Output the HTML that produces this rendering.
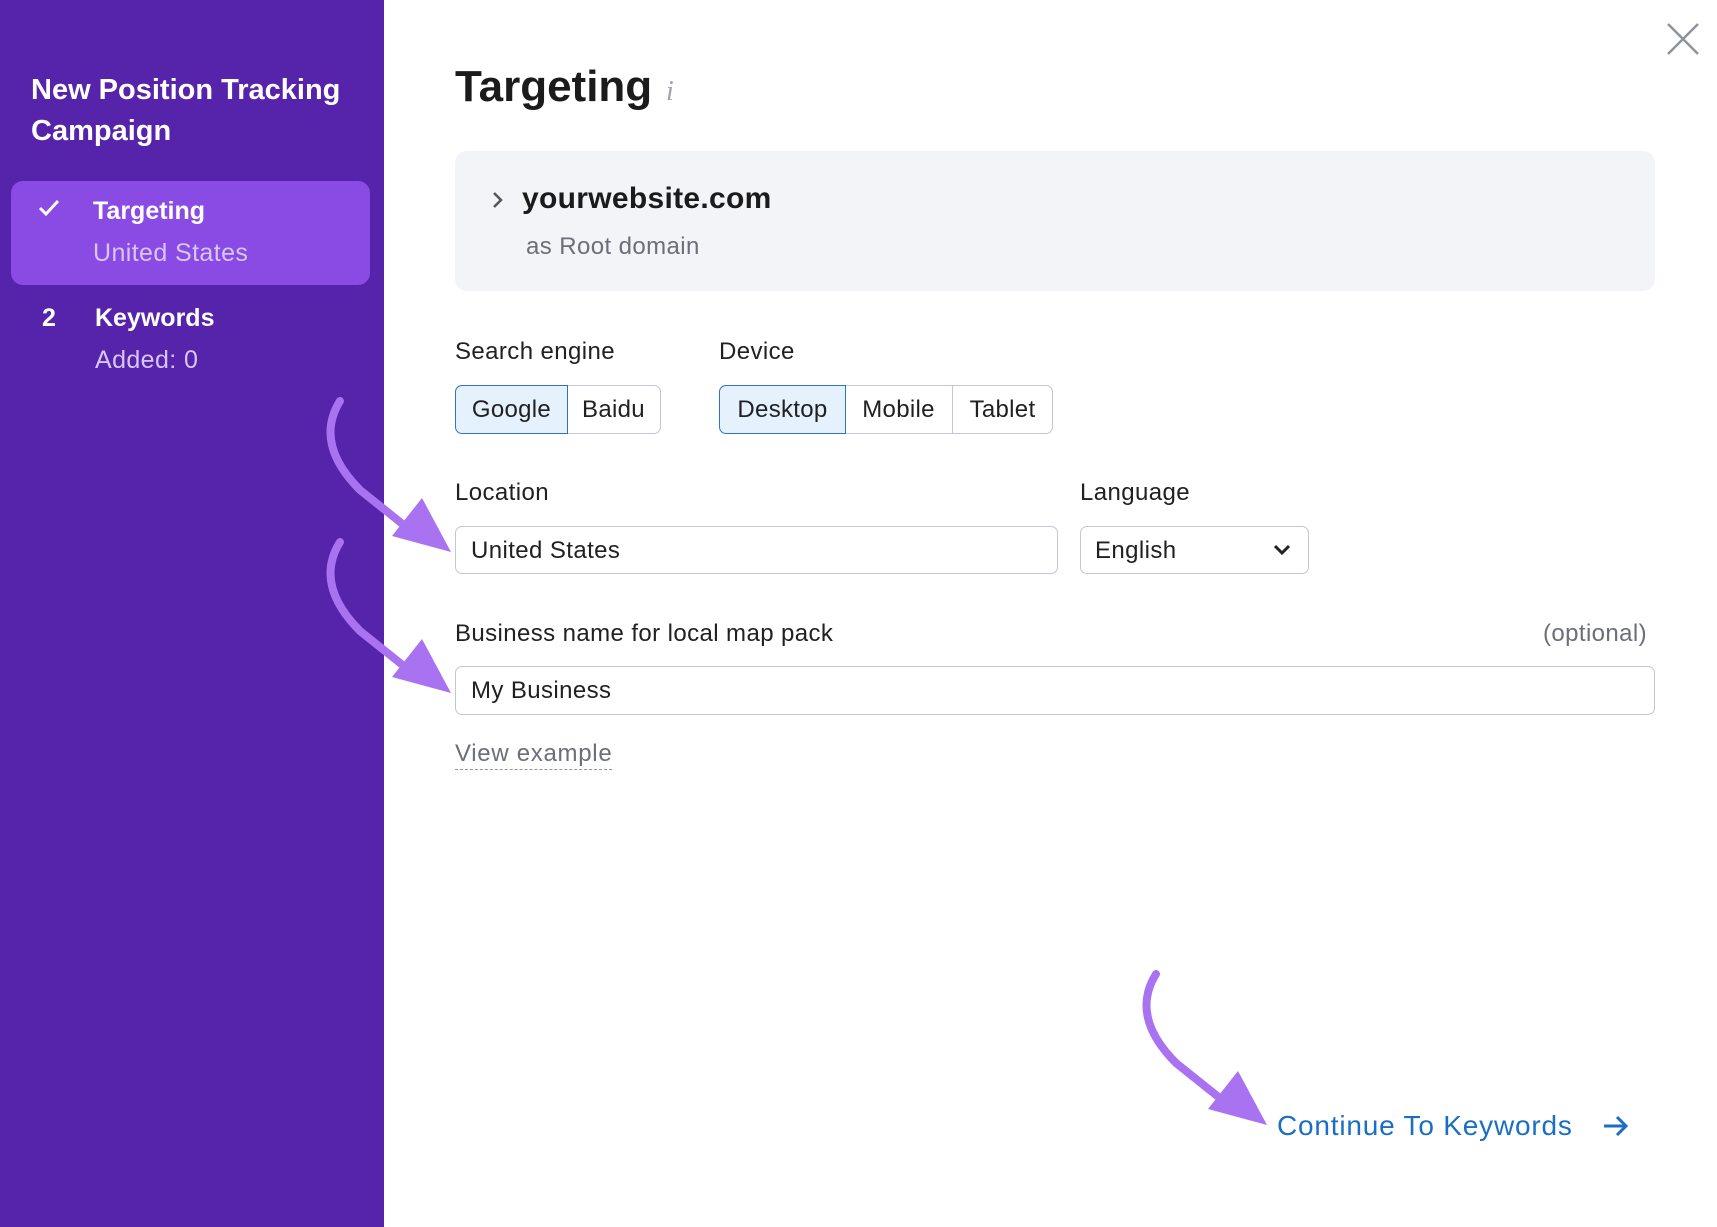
<!DOCTYPE html>
<html><head><meta charset="utf-8"><style>
*{margin:0;padding:0;box-sizing:border-box}
body{width:1717px;height:1227px;position:relative;overflow:hidden;background:#fff;font-family:"Liberation Sans",Arial,sans-serif;color:#212121}
.a{position:absolute;white-space:nowrap}
#side{position:absolute;left:0;top:0;width:384px;height:1227px;background:#5624ab}
.box{position:absolute;border:1px solid #c4c7cf;border-radius:7px;background:#fff}
.seg{position:absolute;top:385px;height:49px;border:1px solid #c4c7cf;font-size:24px;display:flex;align-items:center;justify-content:center;letter-spacing:0.3px}
.sel{background:#e6f1fe;border:1px solid #2f73c4;z-index:2}
.l{letter-spacing:0.4px}
</style></head><body>
<div id="side"></div>
<div class="a" style="left:31px;top:70px;font-size:29px;font-weight:bold;color:#fff;line-height:41px">New Position Tracking<br>Campaign</div>
<div class="a" style="left:11px;top:181px;width:359px;height:104px;background:#8a4be4;border-radius:12px"></div>
<svg class="a" style="left:38px;top:199px" width="22" height="18" viewBox="0 0 22 18"><path d="M2 9 L8 15 L20 2" stroke="#fff" stroke-width="3" fill="none"/></svg>
<div class="a" style="left:93px;top:197px;font-size:25px;font-weight:bold;color:#fff">Targeting</div>
<div class="a l" style="left:93px;top:239px;font-size:25px;color:#d9c6f7">United States</div>
<div class="a" style="left:42px;top:304px;font-size:25px;font-weight:bold;color:#fff">2</div>
<div class="a" style="left:95px;top:304px;font-size:25px;font-weight:bold;color:#fff">Keywords</div>
<div class="a l" style="left:95px;top:346px;font-size:25px;color:#d9c6f7">Added: 0</div>

<div class="a" style="left:455px;top:62px;font-size:44px;font-weight:bold;color:#1b1b1b">Targeting</div>
<div class="a" style="left:666px;top:76px;font-size:28px;font-style:italic;color:#a0a3ab;font-family:'Liberation Serif',serif">i</div>
<svg class="a" style="left:1666px;top:22px" width="34" height="34"><path d="M2 2L32 32M32 2L2 32" stroke="#8f939c" stroke-width="2.5"/></svg>

<div class="a" style="left:455px;top:151px;width:1200px;height:140px;background:#f3f4f8;border-radius:12px"></div>
<svg class="a" style="left:491px;top:190px" width="14" height="20"><path d="M3 3L10 10L3 17" stroke="#555" stroke-width="2.5" fill="none"/></svg>
<div class="a" style="left:522px;top:182px;font-size:30px;font-weight:bold;color:#1b1b1b;letter-spacing:0.3px">yourwebsite.com</div>
<div class="a l" style="left:526px;top:233px;font-size:24px;color:#6c6e79">as Root domain</div>

<div class="a l" style="left:455px;top:338px;font-size:24px">Search engine</div>
<div class="a l" style="left:719px;top:338px;font-size:24px">Device</div>
<div class="seg sel" style="left:455px;width:113px;border-radius:7px 0 0 7px">Google</div>
<div class="seg" style="left:567px;width:94px;border-radius:0 7px 7px 0;border-left:none">Baidu</div>
<div class="seg sel" style="left:719px;width:127px;border-radius:7px 0 0 7px">Desktop</div>
<div class="seg" style="left:845px;width:108px;border-left:none">Mobile</div>
<div class="seg" style="left:952px;width:101px;border-radius:0 7px 7px 0">Tablet</div>

<div class="a l" style="left:455px;top:479px;font-size:24px">Location</div>
<div class="a l" style="left:1080px;top:479px;font-size:24px">Language</div>
<div class="box" style="left:455px;top:526px;width:603px;height:48px"></div>
<div class="a l" style="left:471px;top:537px;font-size:24px">United States</div>
<div class="box" style="left:1080px;top:526px;width:229px;height:48px"></div>
<div class="a l" style="left:1095px;top:537px;font-size:24px">English</div>
<svg class="a" style="left:1272px;top:543px" width="20" height="14"><path d="M3 3L10 10L17 3" stroke="#222" stroke-width="3" fill="none"/></svg>

<div class="a l" style="left:455px;top:620px;font-size:24px">Business name for local map pack</div>
<div class="a l" style="left:1543px;top:620px;font-size:24px;color:#6c6e79">(optional)</div>
<div class="box" style="left:455px;top:666px;width:1200px;height:49px"></div>
<div class="a l" style="left:471px;top:677px;font-size:24px">My Business</div>
<div class="a" style="left:455px;top:740px;font-size:24px;color:#6c6e79;border-bottom:1.5px dashed #8f939c;padding-bottom:1px;letter-spacing:0.7px">View example</div>

<div class="a" style="left:1277px;top:1110px;font-size:28px;color:#1a6fc4;letter-spacing:0.8px">Continue To Keywords</div>
<svg class="a" style="left:1602px;top:1114px" width="28" height="24"><path d="M2 12H24M15 3L24 12L15 21" stroke="#1a6fc4" stroke-width="3" fill="none"/></svg>

<svg class="a" style="left:0;top:0" width="1717" height="1227">
<g id="ar" fill="#a872f0" stroke="#a872f0">
<path d="M340 401 C322 430 330 460 360 490 L410 530" stroke-width="8" fill="none" stroke-linecap="round"/>
<polygon points="451,552 392,536 422,498" stroke="none"/>
</g>
<use href="#ar" transform="translate(0,141)"/>
<use href="#ar" transform="translate(816,573)"/>
</svg>
</body></html>
